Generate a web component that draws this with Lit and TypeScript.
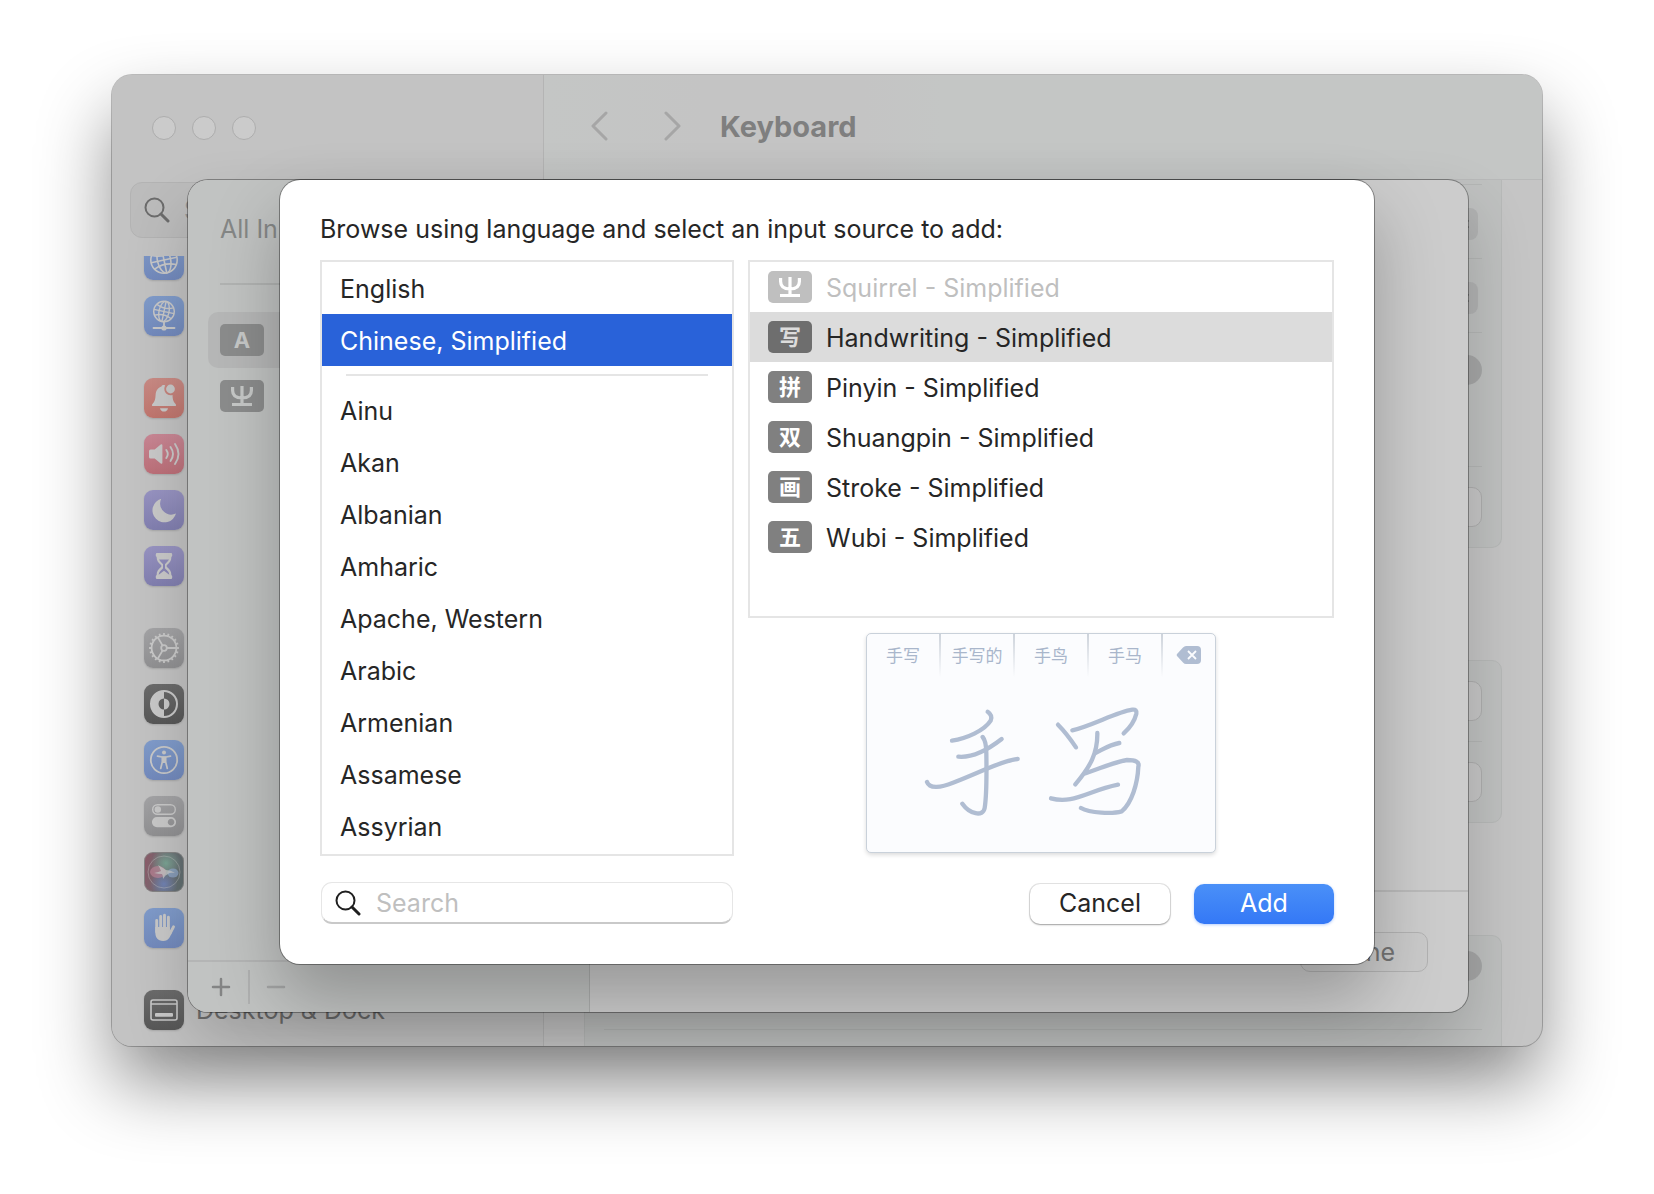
import { LitElement, html, svg, css, nothing } from "lit";
import { customElement, property, state } from "lit/decorators.js";
import { classMap } from "lit/directives/class-map.js";

/* ---------- Glyphs, all on a 40 x 40 grid ---------- */

const gearTeeth = Array.from({ length: 20 }, (_, i) => i * 18);

const glyphs: Record<string, unknown> = {
  globe: svg`
    <g fill="none" stroke="currentColor" stroke-width="1.6">
      <circle cx="20" cy="20" r="13.2"></circle>
      <g transform="rotate(-12 20 20)">
        <ellipse cx="20" cy="20" rx="6.6" ry="13.2"></ellipse>
        <path d="M20 7v26M7 20h26M9 13q11 5 22 0M9 27q11-5 22 0"></path>
      </g>
    </g>`,
  network: svg`
    <g fill="none" stroke="currentColor" stroke-width="1.4">
      <circle cx="20" cy="15.5" r="10.3"></circle>
      <g transform="rotate(12 20 15.5)">
        <ellipse cx="20" cy="15.5" rx="5" ry="10.3"></ellipse>
        <path d="M20 5.2v20.6M9.7 15.5h20.6M11.6 10q8.4 4 16.8 0M11.6 21q8.4-4 16.8 0"></path>
      </g>
      <path d="M20 26v6M9.5 32h21" stroke-width="1.8" stroke-linecap="round"></path>
    </g>
    <circle cx="20" cy="32" r="2.6" fill="currentColor"></circle>`,
  bell: svg`
    <path fill="currentColor" d="M8.6 28C7.6 28 7.8 26.600 8.600 25.800C11 23.500 11.300 21 11.600 17C12 12 14 9.600 17.400 8.400C18 7.200 19.500 6.800 21.200 7.400C19 11.500 21 17 27 17.200C28 17.200 28.300 17 28.500 17C28.700 21 29 23.500 31.400 25.800C32.200 26.600 32.400 28 31.400 28Z"></path>
    <path fill="currentColor" d="M16 30.200h8c-.5 2.400-2 3.400-4 3.400s-3.500-1-4-3.400z"></path>
    <circle cx="26.500" cy="11" r="4.400" fill="currentColor"></circle>`,
  sound: svg`
    <path fill="currentColor" d="M6.500 15.500h4.200l6-5q1.700-1 1.700 1v17q0 2-1.700 1l-6-5H6.500q-1.500 0-1.500-1.500v-6q0-1.500 1.500-1.500z"></path>
    <path fill="none" stroke="currentColor" stroke-width="1.9" stroke-linecap="round" d="M22.300 16q3 4 0 8M26.500 13q5 7 0 14M31 10q7 10 0 20"></path>`,
  moon: svg`<path fill="currentColor" d="M17.200 8.800A12 12 0 1 0 32 23.600A11.200 11.200 0 0 1 17.200 8.800Z"></path>`,
  hourglass: svg`
    <path fill="currentColor" fill-rule="evenodd" d="M13 7h14q1.200 0 1.200 1.200v1.600q0 .8-.8 1c0 4-1.600 5.800-4.400 8.200q-1 1 0 2c2.800 2.400 4.400 4.200 4.400 8.200q.8.200.8 1v1.600q0 1.200-1.200 1.200H13q-1.200 0-1.200-1.200v-1.600q0-.8.8-1c0-4 1.600-5.800 4.400-8.200q1-1 0-2c-2.800-2.400-4.400-4.200-4.400-8.200q-.8-.2-.8-1V8.200Q11.800 7 13 7zM15 13.600c1 2 2.600 3.200 4 4.600v4c-2 2.600-4 3-4.300 6.600l5.300-4 5.300 4c-.3-3.600-2.300-4-4.300-6.600v-4c1.400-1.400 3-2.600 4-4.600z"></path>`,
  gear: svg`
    <g fill="none" stroke="currentColor" stroke-width="1.8">
      <circle cx="20" cy="20" r="12.400"></circle>
      <circle cx="20" cy="20" r="2.800"></circle>
      <path d="M23 20h9M18.500 17.400l-4.700-8M18.500 22.600l-4.700 8"></path>
      ${gearTeeth.map((a) => svg`<path d="M20 7.500v-2.400" transform=${`rotate(${a} 20 20)`}></path>`)}
    </g>`,
  contrast: svg`
    <circle cx="20" cy="20" r="13" fill="none" stroke="currentColor" stroke-width="2"></circle>
    <path fill="currentColor" d="M20 7v7.500a5.500 5.500 0 0 0 0 11V33a13 13 0 0 1 0-26zM20 14.500a5.500 5.500 0 0 1 0 11z"></path>`,
  access: svg`
    <circle cx="20" cy="20" r="13.200" fill="none" stroke="currentColor" stroke-width="1.800"></circle>
    <circle cx="20" cy="12.500" r="2" fill="currentColor"></circle>
    <path fill="none" stroke="currentColor" stroke-width="1.700" stroke-linecap="round" stroke-linejoin="round" d="M13.500 16.200l4.500.8h4l4.500-.8M18.300 17v5l-1.600 6.500M21.700 17v5l1.600 6.500"></path>
    <path fill="currentColor" d="M18 16.500h4v6.500h-4z"></path>`,
  switches: svg`
    <rect x="8.700" y="8.700" width="22.600" height="9.600" rx="4.800" fill="none" stroke="currentColor" stroke-width="1.400"></rect>
    <circle cx="13.800" cy="13.500" r="3.200" fill="currentColor"></circle>
    <path fill="currentColor" fill-rule="evenodd" d="M13 21h14a5 5 0 0 1 0 10.200H13A5 5 0 0 1 13 21zM27 22.800a3.300 3.300 0 1 0 .1 0z"></path>`,
  siri: svg`
    <circle cx="20" cy="20" r="16" fill="none" stroke="currentColor" stroke-width="1" opacity=".4"></circle>
    <ellipse cx="14" cy="20" rx="8" ry="6" fill="#c8899c" opacity=".6"></ellipse>
    <ellipse cx="29" cy="21" rx="5.500" ry="4.500" fill="#93abd0" opacity=".7"></ellipse>
    <path fill="currentColor" opacity=".75" d="M14 13q5 3 8 5 5 0 9 3-5-1-7 1-3 1-5 5 0-4-1-5-4 0-8-1 5-1 7-2-1-3-3-6z"></path>`,
  hand: svg`
    <g fill="none" stroke="currentColor" stroke-width="2.900" stroke-linecap="round">
      <path d="M12.700 12.500V24M16.700 8.500V22M20.500 7.300V22M24.400 9.200V22M29.500 18.800L26 25.500"></path>
    </g>
    <path fill="currentColor" d="M11.300 19h14.500v4l3.600-3.500c-1.600 5-2.400 8-4.200 10.500q-2 3-6 3c-5.600 0-7.900-3.500-7.900-9z"></path>`,
  dock: svg`
    <rect x="7" y="10" width="26" height="20" rx="2" fill="none" stroke="currentColor" stroke-width="1.600"></rect>
    <path d="M7 14h26" stroke="currentColor" stroke-width="1.300"></path>
    <rect x="11" y="23" width="18" height="3.800" rx="1" fill="currentColor"></rect>`,
};

/* The Squirrel input method's trident mark */
const trident = svg`
  <g fill="none" stroke="currentColor" stroke-width="3.200">
    <path d="M12.600 7v3.500q0 7.500 9.400 7.500t9.400-7.500V7M22 6v18M12 24.500h20"></path>
  </g>`;

const magnifier = html`
  <svg class="magnifier" viewBox="0 0 26 26" aria-hidden="true">
    <circle cx="10.500" cy="10.500" r="9" fill="none" stroke="currentColor" stroke-width="2"></circle>
    <path d="M17 17l7 7" stroke="currentColor" stroke-width="3" stroke-linecap="round"></path>
  </svg>`;

/* ---------- Source badge ---------- */

@customElement("source-badge")
export class SourceBadge extends LitElement {
  @property() mark = "";

  static styles = css`
    :host {
      display: grid;
      place-items: center;
      flex: none;
      width: 44px;
      height: 32px;
      border-radius: 5px;
      font: 700 22px/32px Inter, "Noto Sans CJK SC", sans-serif;
    }
    svg {
      width: 44px;
      height: 32px;
    }
  `;

  render() {
    return this.mark === "trident"
      ? html`<svg viewBox="0 0 44 32" aria-hidden="true">${trident}</svg>`
      : html`<span>${this.mark}</span>`;
  }
}

/* ---------- Settings window behind the sheets ---------- */

interface SidebarItem {
  glyph: string;
  tone: string;
  label?: string;
}

const sidebarGroups: SidebarItem[][] = [
  [
    { glyph: "globe", tone: "blue" },
    { glyph: "network", tone: "blue" },
  ],
  [
    { glyph: "bell", tone: "red" },
    { glyph: "sound", tone: "pink" },
    { glyph: "moon", tone: "violet" },
    { glyph: "hourglass", tone: "violet" },
  ],
  [
    { glyph: "gear", tone: "gray" },
    { glyph: "contrast", tone: "black" },
    { glyph: "access", tone: "blue" },
    { glyph: "switches", tone: "gray" },
    { glyph: "siri", tone: "siri" },
    { glyph: "hand", tone: "blue" },
  ],
  [{ glyph: "dock", tone: "black", label: "Desktop & Dock" }],
];

@customElement("settings-window")
export class SettingsWindow extends LitElement {
  static styles = css`
    :host {
      display: grid;
      grid-template-columns: 432px 1fr;
      overflow: hidden;
      border-radius: 20px;
      background: #c5c5c5;
      color: #7f7f7f;
      box-shadow: 0 0 0 1px rgba(0, 0, 0, 0.24), 0 38px 72px rgba(0, 0, 0, 0.44);
    }
    .sidebar {
      display: flex;
      flex-direction: column;
      min-height: 0;
      background: #c3c3c3;
      border-right: 1px solid #b4b4b4;
    }
    .lights {
      display: flex;
      gap: 16px;
      padding: 41px 40px 42px;
    }
    .light {
      box-sizing: border-box;
      width: 24px;
      height: 24px;
      padding: 0;
      border: 1px solid #adadad;
      border-radius: 50%;
      background: #cbcbcb;
    }
    .search {
      display: flex;
      align-items: center;
      gap: 14px;
      box-sizing: border-box;
      height: 56px;
      margin: 0 18px;
      padding: 0 13px;
      border: 1px solid #b3b3b3;
      border-radius: 12px;
      background: #bcbcbc;
      color: #6c6c6c;
    }
    .magnifier {
      flex: none;
      width: 26px;
      height: 26px;
    }
    .search input {
      flex: 1;
      min-width: 0;
      border: 0;
      padding: 0;
      background: none;
      font: 25px/32px Inter, sans-serif;
      outline: none;
    }
    .search input::placeholder {
      color: #939393;
      opacity: 1;
    }
    .places {
      flex: 1;
      min-height: 0;
      overflow: hidden;
      margin-top: 18px;
    }
    .group {
      display: grid;
      gap: 16px;
      margin: 0 0 42px;
      padding: 0 32px;
      list-style: none;
    }
    .group:first-child {
      margin-top: -16px;
    }
    .group:last-child {
      margin-bottom: 0;
    }
    .place {
      display: flex;
      align-items: center;
      gap: 12px;
      height: 40px;
      color: #6e6e6e;
      font-size: 25px;
      text-decoration: none;
    }
    .tile {
      flex: none;
      width: 40px;
      height: 40px;
      border-radius: 9px;
      color: #c9c9c9;
      box-shadow: 0 1px 2px rgba(0, 0, 0, 0.14);
    }
    .blue { background: linear-gradient(#809ccb, #738abd); }
    .red { background: linear-gradient(#c98b85, #c1766e); }
    .pink { background: linear-gradient(#c98795, #bd7079); }
    .violet { background: linear-gradient(#9894c2, #8280b0); }
    .gray { background: linear-gradient(#a4a4a6, #919193); }
    .black { background: linear-gradient(#6c6c6c, #585858); }
    .siri {
      background:
        radial-gradient(circle at 55% 28%, #7ba494 0, transparent 42%),
        radial-gradient(circle at 50% 80%, #7183b4 0, transparent 36%),
        linear-gradient(100deg, #8f5a68, #6f6f76 50%, #5f6f70);
      box-shadow: inset 0 0 0 1px #858585;
    }
    .main {
      display: flex;
      flex-direction: column;
      min-width: 0;
      min-height: 0;
    }
    .toolbar {
      display: flex;
      align-items: center;
      box-sizing: border-box;
      height: 105px;
      padding: 0 46px;
      border-bottom: 1px solid #b8b9b9;
      background: linear-gradient(90deg, #c4c6c5, #c4c4c4 16%, #c4c4c4 32%, #c4c6c5 40%);
    }
    .step {
      width: 20px;
      height: 32px;
      margin-right: 52px;
      padding: 0;
      border: 0;
      background: none;
      color: #a6a6a6;
    }
    .step + .step {
      margin-right: 38px;
    }
    .step svg {
      display: block;
      width: 20px;
      height: 32px;
    }
    h1 {
      margin: 0;
      font-size: 29px;
      line-height: 36px;
      font-weight: 700;
    }
    .pane {
      display: flex;
      flex-direction: column;
      flex: 1;
      min-height: 0;
      overflow: hidden;
      padding: 0 40px;
    }
    .card {
      box-sizing: border-box;
      margin-bottom: 112px;
      padding: 0 19px;
      border: 1px solid #b7b9b8;
      border-radius: 10px;
      background: #bfc1c0;
    }
    .card.head {
      border-top: 0;
      border-radius: 0 0 10px 10px;
      padding-top: 4px;
    }
    .card.tail {
      flex: 1;
      margin-bottom: 0;
      border-bottom: 0;
      border-radius: 10px 10px 0 0;
    }
    .row {
      display: flex;
      justify-content: flex-end;
      box-sizing: border-box;
      padding: 20px 0;
      border-top: 1px solid #b4b6b5;
    }
    .card:not(.head) .row:first-child {
      border-top: 0;
    }
    .menu-row {
      padding: 23px 4px 18px;
    }
    .tall {
      padding: 22px 0 81px;
    }
    .tail .row {
      padding: 15px 0 48px;
    }
    .tail .row:last-child {
      padding: 0;
    }
    .push {
      box-sizing: border-box;
      width: 140px;
      height: 40px;
      border: 1px solid #aeaeae;
      border-radius: 10px;
      background: #c6c6c6;
    }
    .menu {
      display: grid;
      align-items: center;
      justify-items: end;
    }
    .menu > * {
      grid-area: 1 / 1;
    }
    .menu select {
      width: 120px;
      height: 32px;
      border: 0;
      border-radius: 8px;
      background: #b2b3b3;
      appearance: none;
    }
    .menu svg {
      width: 24px;
      height: 26px;
      color: #4b4b4b;
      pointer-events: none;
    }
    .knob {
      width: 30px;
      height: 30px;
      padding: 0;
      border: 0;
      border-radius: 50%;
      background: #a6a7a7;
    }
  `;

  private menu(name: string) {
    return html`<div class="row menu-row">
      <div class="menu">
        <select aria-label=${name}></select>
        <svg viewBox="0 0 24 26" aria-hidden="true">
          <path d="M4 10l4.500-5 4.500 5M4 16l4.500 5 4.500-5" fill="none" stroke="currentColor" stroke-width="3" stroke-linecap="round"></path>
        </svg>
      </div>
    </div>`;
  }

  render() {
    return html`
      <div class="sidebar">
        <div class="lights">
          <button class="light" aria-label="Close"></button>
          <button class="light" aria-label="Minimize"></button>
          <button class="light" aria-label="Zoom"></button>
        </div>
        <label class="search">${magnifier}<input type="text" placeholder="Search" aria-label="Search" /></label>
        <nav class="places">
          ${sidebarGroups.map(
            (group) => html`<ul class="group">
              ${group.map(
                (item) => html`<li>
                  <a class="place" href="#" aria-label=${item.label ?? item.glyph}>
                    <svg class="tile ${item.tone}" viewBox="0 0 40 40" aria-hidden="true">${glyphs[item.glyph]}</svg>
                    ${item.label ? html`<span>${item.label}</span>` : nothing}
                  </a>
                </li>`
              )}
            </ul>`
          )}
        </nav>
      </div>
      <div class="main">
        <header class="toolbar">
          <button class="step" aria-label="Back">
            <svg viewBox="0 0 20 32"><path d="M16 2L3 15l13 13" fill="none" stroke="currentColor" stroke-width="3" stroke-linecap="round" stroke-linejoin="round"></path></svg>
          </button>
          <button class="step" aria-label="Forward">
            <svg viewBox="0 0 20 32"><path d="M4 2L17 15L4 28" fill="none" stroke="currentColor" stroke-width="3" stroke-linecap="round" stroke-linejoin="round"></path></svg>
          </button>
          <h1>Keyboard</h1>
        </header>
        <div class="pane">
          <section class="card head">
            ${this.menu("Keyboard option")} ${this.menu("Globe key option")}
            <div class="row tall"><button class="knob" aria-label="Navigation"></button></div>
            <div class="row"><button class="push" aria-label="Shortcuts"></button></div>
          </section>
          <section class="card">
            <div class="row"><button class="push" aria-label="Input sources"></button></div>
            <div class="row"><button class="push" aria-label="Replacements"></button></div>
          </section>
          <section class="card tail">
            <div class="row"><button class="knob" aria-label="Dictation"></button></div>
            <div class="row"></div>
          </section>
        </div>
      </div>
    `;
  }
}

/* ---------- Middle sheet: installed sources ---------- */

@customElement("sources-sheet")
export class SourcesSheet extends LitElement {
  static styles = css`
    :host {
      display: grid;
      grid-template-columns: 402px 1fr;
      overflow: hidden;
      border-radius: 20px;
      background: #cccccc;
      box-shadow: 0 0 0 1px rgba(0, 0, 0, 0.34), 0 32px 64px rgba(0, 0, 0, 0.19);
    }
    .installed {
      display: flex;
      flex-direction: column;
      background: #c1c3c2;
      border-right: 1px solid #acaead;
    }
    h2 {
      margin: 33px 32px 38px;
      color: #858786;
      font-size: 25px;
      line-height: 32px;
      font-weight: 400;
    }
    ul {
      flex: 1;
      margin: 0 32px;
      padding: 27px 0 0;
      border-top: 2px solid #b1b3b2;
      list-style: none;
    }
    li {
      display: flex;
      align-items: center;
      height: 56px;
      margin: 0 -12px;
      padding: 0 12px;
      border-radius: 10px;
    }
    .active {
      background: #b6b7b7;
    }
    source-badge {
      background: #8b8c8c;
      color: #c6c8c7;
    }
    .tools {
      display: flex;
      align-items: center;
      height: 50px;
      padding: 0 6px;
      border-top: 2px solid #b4b5b5;
    }
    .tools button {
      width: 54px;
      height: 34px;
      padding: 0;
      border: 0;
      background: none;
      color: #848585;
    }
    .tools button + button {
      color: #a3a4a4;
      border-left: 2px solid #b0b1b1;
    }
    .tools svg {
      display: block;
      width: 20px;
      height: 20px;
      margin: 0 auto;
    }
    .detail {
      display: flex;
      flex-direction: column;
      justify-content: flex-end;
    }
    .foot {
      display: flex;
      justify-content: flex-end;
      padding: 40px;
      border-top: 2px solid #bababa;
    }
    .done {
      box-sizing: border-box;
      width: 128px;
      height: 40px;
      padding: 0;
      border: 1px solid #b2b2b2;
      border-radius: 10px;
      background: #cacaca;
      color: #737373;
      font: 25px/36px Inter, sans-serif;
    }
  `;

  render() {
    return html`
      <div class="installed">
        <h2>All In</h2>
        <ul>
          <li class="active"><source-badge mark="A"></source-badge></li>
          <li><source-badge mark="trident"></source-badge></li>
        </ul>
        <div class="tools">
          <button aria-label="Add source">
            <svg viewBox="0 0 20 20"><path d="M10 2v16M2 10h16" stroke="currentColor" stroke-width="2.500" stroke-linecap="round"></path></svg>
          </button>
          <button aria-label="Remove source">
            <svg viewBox="0 0 20 20"><path d="M2 10h16" stroke="currentColor" stroke-width="2.500" stroke-linecap="round"></path></svg>
          </button>
        </div>
      </div>
      <div class="detail">
        <div class="foot"><button class="done">Done</button></div>
      </div>
    `;
  }
}

/* ---------- Front sheet: add an input source ---------- */

const pinned = ["English", "Chinese, Simplified"];
const languages = ["Ainu", "Akan", "Albanian", "Amharic", "Apache, Western", "Arabic", "Armenian", "Assamese", "Assyrian"];

const sources = [
  { mark: "trident", name: "Squirrel - Simplified", added: true },
  { mark: "写", name: "Handwriting - Simplified", added: false },
  { mark: "拼", name: "Pinyin - Simplified", added: false },
  { mark: "双", name: "Shuangpin - Simplified", added: false },
  { mark: "画", name: "Stroke - Simplified", added: false },
  { mark: "五", name: "Wubi - Simplified", added: false },
];

const candidates = ["手写", "手写的", "手鸟", "手马"];

@customElement("add-source-sheet")
export class AddSourceSheet extends LitElement {
  @state() private language = "Chinese, Simplified";
  @state() private source = "Handwriting - Simplified";

  static styles = css`
    :host {
      display: block;
      padding: 33px 40px 40px;
      border-radius: 20px;
      background: #ffffff;
      color: #262626;
      box-shadow: 0 0 0 1px rgba(0, 0, 0, 0.36), 0 34px 68px rgba(0, 0, 0, 0.26);
    }
    button,
    input {
      font: inherit;
      color: inherit;
    }
    h2 {
      margin: 0 0 15px;
      font-size: 25px;
      line-height: 32px;
      font-weight: 400;
    }
    .browse {
      display: grid;
      grid-template-columns: 414fr 586fr;
      gap: 14px;
    }
    .list {
      margin: 0;
      padding: 0 0 2px;
      border: 2px solid #e5e5e5;
      list-style: none;
    }
    .list button {
      display: flex;
      align-items: center;
      gap: 14px;
      width: 100%;
      padding: 0 18px;
      border: 0;
      background: none;
      text-align: left;
    }
    .list .name {
      padding-top: 2px;
    }
    .language {
      height: 52px;
    }
    .language.chosen {
      background: #2962d9;
      color: #ffffff;
    }
    .rule {
      height: 2px;
      margin: 8px 24px;
      background: #e5e5e5;
    }
    .side {
      display: flex;
      flex-direction: column;
      gap: 15px;
      min-width: 0;
      padding-bottom: 3px;
    }
    .sources {
      flex: 1;
      padding: 0;
    }
    .source {
      height: 50px;
    }
    .source source-badge {
      background: #808080;
      color: #ffffff;
    }
    .source.chosen {
      background: #dcdcdc;
    }
    .source.chosen source-badge {
      background: #6e6e6e;
      color: #dcdcdc;
    }
    .source:disabled {
      color: #bfbfbf;
    }
    .source:disabled source-badge {
      background: #bfbfbf;
    }
    .preview {
      align-self: center;
      box-sizing: border-box;
      width: 350px;
      border: 1px solid #c9d1da;
      border-radius: 5px;
      background: #fbfcfe;
      color: #b0bdd2;
      box-shadow: 0 2px 4px rgba(0, 0, 0, 0.14);
    }
    .strip {
      display: grid;
      grid-template-columns: repeat(4, 74fr) 52fr;
      height: 46px;
    }
    .candidate,
    .erase {
      display: grid;
      place-items: center;
      padding-bottom: 4px;
      font: 17px/24px "Noto Sans CJK SC", sans-serif;
      color: #a9b6cb;
    }
    .candidate {
      border-right: 2px solid;
      border-image: linear-gradient(#ccd2da, #fbfcfe 92%) 1;
      border-top: 0;
      border-left: 0;
      border-bottom: 0;
    }
    .erase svg {
      width: 26px;
      height: 20px;
      color: #b0bdd2;
    }
    .strokes {
      display: block;
      width: 100%;
    }
    .actions {
      display: flex;
      align-items: flex-end;
      gap: 24px;
      margin-top: 26px;
    }
    .search {
      display: flex;
      align-items: center;
      gap: 15px;
      box-sizing: border-box;
      width: 412px;
      height: 42px;
      margin: 0 auto 0 1px;
      padding: 0 13px;
      border: 1px solid #e6e6e6;
      border-bottom: 2px solid #c9c9c9;
      border-radius: 11px;
      color: #1f1f1f;
    }
    .magnifier {
      flex: none;
      width: 26px;
      height: 26px;
    }
    .search input {
      flex: 1;
      min-width: 0;
      padding: 0;
      border: 0;
      outline: none;
      background: none;
    }
    .search input::placeholder {
      color: #bfbfbf;
      opacity: 1;
    }
    .push {
      width: 140px;
      height: 40px;
      padding: 0 0 2px;
      border: 0;
      border-radius: 10px;
      background: #ffffff;
      box-shadow: 0 0 0 1px rgba(0, 0, 0, 0.1), 0 1px 2px rgba(0, 0, 0, 0.3);
    }
    .push.primary {
      background: linear-gradient(#4a90f8, #3478f6);
      color: #ffffff;
      box-shadow: 0 1px 3px rgba(52, 120, 246, 0.36);
    }
  `;

  private languageRow(name: string) {
    return html`<li>
      <button
        class=${classMap({ language: true, chosen: name === this.language })}
        aria-pressed=${name === this.language}
        @click=${() => (this.language = name)}
      ><span class="name">${name}</span></button>
    </li>`;
  }

  render() {
    return html`
      <h2>Browse using language and select an input source to add:</h2>
      <div class="browse">
        <ul class="list">
          ${pinned.map((name) => this.languageRow(name))}
          <li class="rule" role="separator"></li>
          ${languages.map((name) => this.languageRow(name))}
        </ul>
        <div class="side">
          <ul class="list sources">
            ${sources.map(
              (s) => html`<li>
                <button
                  class=${classMap({ source: true, chosen: s.name === this.source })}
                  ?disabled=${s.added}
                  aria-pressed=${s.name === this.source}
                  @click=${() => (this.source = s.name)}
                ><source-badge mark=${s.mark}></source-badge><span class="name">${s.name}</span></button>
              </li>`
            )}
          </ul>
          <div class="preview">
            <div class="strip">
              ${candidates.map((c) => html`<span class="candidate">${c}</span>`)}
              <span class="erase">
                <svg viewBox="0 0 26 20" aria-hidden="true">
                  <path fill="currentColor" d="M1 9q-.8 1 0 2l6 6.500Q8.400 19 10 19h11q4 0 4-4V5q0-4-4-4H10Q8.400 1 7 2.500z"></path>
                  <path d="M12 6l8 8M20 6l-8 8" stroke="#fbfcfe" stroke-width="1.800"></path>
                </svg>
              </span>
            </div>
            <svg class="strokes" viewBox="52 180 1044 516" aria-hidden="true">
              <g fill="none" stroke="currentColor" stroke-width="13" stroke-linecap="round" stroke-linejoin="round">
                <path d="M414 275Q430 286 423 302C404 332 350 356 307 362"></path>
                <path d="M326 410C370 414 420 385 456 357"></path>
                <path d="M399 351Q410 364 410 400C411 460 412 520 405 564C400 592 360 582 338 551"></path>
                <path d="M232 486C240 508 275 502 310 488C380 462 460 420 504 417"></path>
                <path d="M625 314C645 334 663 358 679 382"></path>
                <path d="M668 331C730 316 800 276 848 269Q862 267 860 281C854 306 842 322 822 340"></path>
                <path d="M743 339C744 400 722 440 677 493"></path>
                <path d="M737 399C760 388 780 374 809 369"></path>
                <path d="M706 460C750 446 800 424 832 420Q872 420 866 440C864 490 846 550 816 574C790 582 720 580 694 564"></path>
                <path d="M604 535C670 554 715 512 805 494"></path>
              </g>
            </svg>
          </div>
        </div>
      </div>
      <div class="actions">
        <label class="search">${magnifier}<input type="text" placeholder="Search" aria-label="Search" /></label>
        <button class="push">Cancel</button>
        <button class="push primary">Add</button>
      </div>
    `;
  }
}

/* ---------- Page ---------- */

@customElement("app-root")
export class AppRoot extends LitElement {
  static styles = css`
    :host {
      display: grid;
      box-sizing: border-box;
      min-height: 100vh;
      padding: 75px 112px 148px;
      overflow: hidden;
      background: #ffffff;
      font: 25px/32px Inter, "Noto Sans CJK SC", sans-serif;
    }
    settings-window,
    sources-sheet,
    add-source-sheet {
      grid-area: 1 / 1;
      min-width: 0;
    }
    sources-sheet {
      margin: 105px 74px 34px 76px;
    }
    add-source-sheet {
      align-self: start;
      margin: 105px 168px 0;
    }
  `;

  render() {
    return html`
      <settings-window></settings-window>
      <sources-sheet></sources-sheet>
      <add-source-sheet></add-source-sheet>
    `;
  }
}
